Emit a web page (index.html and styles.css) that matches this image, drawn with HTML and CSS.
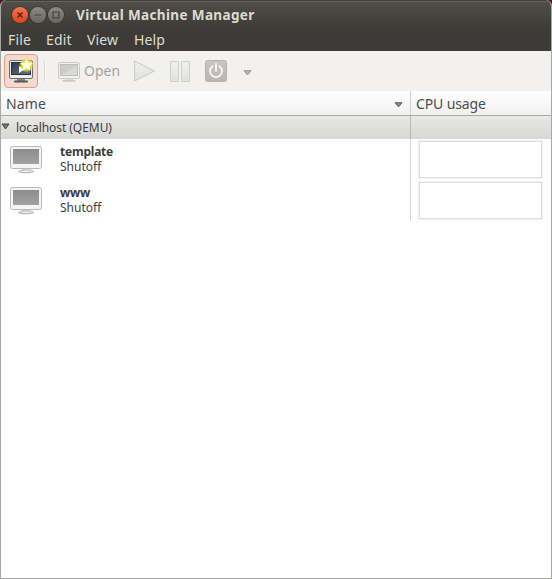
FILE: index.html
```html
<!DOCTYPE html>
<html lang="en">
<head>
<meta charset="utf-8">
<title>Virtual Machine Manager</title>
<link rel="stylesheet" href="styles.css">
</head>
<body>
<svg class="defs" width="0" height="0" aria-hidden="true">
  <defs>
    <linearGradient id="screen" x2="0" y2="1"><stop stop-color="#8c8c8c"/><stop offset="1" stop-color="#a2a2a2"/></linearGradient>
    <linearGradient id="blue" x2="1" y2="1"><stop stop-color="#30394c"/><stop offset="1" stop-color="#687487"/></linearGradient>
    <linearGradient id="power" x2="0" y2="1"><stop stop-color="#cbc6c4"/><stop offset="1" stop-color="#b9b3b2"/></linearGradient>
    <linearGradient id="pale" x2="0" y2="1"><stop stop-color="#f0f0ee"/><stop offset="1" stop-color="#e0e2dd"/></linearGradient>
    <radialGradient id="glow"><stop stop-color="#fff957"/><stop offset=".65" stop-color="#ece62b" stop-opacity=".9"/><stop offset="1" stop-color="#eee94b" stop-opacity="0"/></radialGradient>
    <symbol id="monitor" viewBox="0 0 34 28">
      <path d="M12 22.500h10v3H12z" fill="#d0d0d0"/>
      <ellipse cx="17" cy="25.500" rx="8" ry="1.700" fill="#b9b9b9"/>
      <ellipse cx="17" cy="25.200" rx="6.500" ry=".7" fill="#eee"/>
      <rect x="1.500" y=".5" width="31" height="22" rx="2" fill="#f5f5f5" stroke="#b9b9b9"/>
      <rect x="4" y="3" width="26" height="15" fill="url(#screen)"/>
    </symbol>
  </defs>
</svg>
<div class="window">
  <header class="chrome">
    <div class="titlebar">
      <div class="controls">
        <svg class="control close" viewBox="0 0 16 16"><path d="m5.500 5.500 5 5m0-5-5 5"/></svg>
        <svg class="control" viewBox="0 0 16 16"><path d="M4.500 8h7"/></svg>
        <svg class="control" viewBox="0 0 16 16"><path d="M5 5h6v6H5z"/></svg>
      </div>
      <h1>Virtual Machine Manager</h1>
    </div>
    <nav class="menu"><span class="file">File</span><span class="edit">Edit</span><span class="view">View</span><span>Help</span></nav>
  </header>
  <div class="toolbar">
    <button class="new" aria-label="New">
      <svg width="32" height="32" viewBox="0 0 32 32">
        <path d="M12 24h8v3h-8z" fill="#85898b"/><rect x="9" y="25.500" width="14" height="2" rx="1" fill="#53585b"/>
        <rect x="4.500" y="5.500" width="23" height="18" rx="1.500" fill="#eceeed" stroke="#696d70"/>
        <rect x="6.500" y="7.500" width="19" height="12" fill="url(#blue)" stroke="#29303d"/>
        <path d="M14 11v7l6-4z" fill="#fff"/>
        <circle cx="21.500" cy="10" r="7.500" fill="url(#glow)"/>
        <path d="m21.500 3.500 1.800 4.300 4.700.3-3.600 3 1.200 4.600-4.100-2.500-4.100 2.500 1.200-4.600-3.600-3 4.700-.3z" fill="#ffffe8"/>
      </svg>
    </button>
    <i class="separator"></i>
    <svg class="open-icon" width="24" height="21" viewBox="0 0 24 21">
      <path d="M8 16h8v3H8z" fill="#ddd"/><rect x="5.500" y="18" width="13" height="1.700" rx=".8" fill="#c9c9c8"/>
      <rect x="1.500" y=".5" width="21" height="16" rx="1.500" fill="#f1f1ef" stroke="#cbcac8"/>
      <rect x="3.500" y="2.500" width="17" height="11" fill="#cecdcc" stroke="#bdbdbb"/><path d="M4 13 20 4v9z" fill="#dad9d8"/>
    </svg>
    <span class="open">Open</span>
    <svg class="play" width="22" height="22" viewBox="0 0 22 22"><path d="M.6 1v20L20.500 11z" fill="url(#pale)" stroke="#c9cac7"/></svg>
    <svg class="pause" width="20" height="21" viewBox="0 0 20 21"><path d="M.5.5h8v20h-8zM11.500.5h8v20h-8z" fill="url(#pale)" stroke="#d0d1ce"/></svg>
    <svg class="power" width="22" height="22" viewBox="0 0 22 22"><rect x=".5" y=".5" width="21" height="21" rx="2" fill="url(#power)" stroke="#b7b1b0"/><path d="M7.500 6.300a6 6 0 1 0 7 0M11 4v7" fill="none" stroke="#f5f3f2" stroke-width="2" stroke-linecap="round"/></svg>
    <svg class="more" width="9" height="6" viewBox="0 0 9 6"><path d="M1 .7h7L4.500 5z" fill="#b5b5b5" stroke="#979797"/></svg>
  </div>
  <div class="columns">
    <div class="name-head"><span>Name</span><svg width="9" height="6" viewBox="0 0 9 6"><path d="M1 .7h7L4.500 5z" fill="#888" stroke="#666"/></svg></div>
    <div class="cpu-head"><span>CPU usage</span></div>
  </div>
  <div class="group">
    <div class="group-name"><svg width="9" height="7" viewBox="0 0 9 7"><path d="M1 1h7L4.500 6z" fill="#777" stroke="#484848"/></svg><span>localhost (QEMU)</span></div>
  </div>
  <main>
    <div class="row">
      <div class="machine"><svg width="34" height="28"><use href="#monitor"/></svg><div class="label"><b>template</b><span>Shutoff</span></div></div>
      <div class="usage"><div class="graph"></div></div>
    </div>
    <div class="row">
      <div class="machine"><svg width="34" height="28"><use href="#monitor"/></svg><div class="label"><b>www</b><span>Shutoff</span></div></div>
      <div class="usage"><div class="graph"></div></div>
    </div>
  </main>
</div>
</body>
</html>
```
FILE: styles.css
```css
* { box-sizing: border-box; }
body { margin: 0; background: #4b1515; font: 13.5px/18px "Noto Sans", "Open Sans", sans-serif; color: #4c4c4c; }
svg { display: block; flex: none; }
span, h1, b { white-space: nowrap; }
.defs { position: absolute; }
.window { height: 579px; display: flex; flex-direction: column; background: #fff; border: 1px solid #a7a7a2; border-top: 0; border-radius: 6px 6px 0 0; overflow: hidden; }
.chrome { height: 51px; flex: none; margin: 0 -1px; background: linear-gradient(#504f49, #3c3b37 28px); border-top: 1px solid #403f3b; box-shadow: inset 0 1px #65645c; color: #dfdbd2; }
.titlebar { height: 27px; display: flex; align-items: center; padding: 0 0 0 11px; }
.controls { display: flex; gap: 2px; width: 65px; padding: 1px 0 0 1px; }
.control { width: 16px; height: 16px; border-radius: 50%; background: linear-gradient(#8b8a83, #686760); box-shadow: 0 0 0 1px #383733; fill: none; stroke: #42413b; stroke-width: 1.2; }
.close { background: linear-gradient(#f5774e, #dc431c); stroke: #5d2313; stroke-width: 1.5; }
h1 { margin: 0; font-size: 13.5px; line-height: 20px; letter-spacing: .36px; }
.menu { display: flex; padding: 2px 8px 0; font-size: 14px; line-height: 20px; letter-spacing: .15px; }
.file { width: 38px; }
.edit { width: 41px; }
.view { width: 47px; }
.toolbar { height: 40px; flex: none; display: flex; align-items: center; padding: 0 3px; background: #f2f1f0; }
.new { display: grid; place-items: center; width: 34px; height: 34px; padding: 0; border: 1px solid #e69b80; border-radius: 4px; background: #f3d9ce; }
.separator { width: 2px; height: 20px; margin-left: 6px; background: #d8d7d5; border-right: 1px solid #fafafa; }
.open-icon { margin-left: 11px; margin-top: 2px; }
.open { width: 38px; margin-left: 3px; font-size: 14px; color: #a4a39f; }
.play { margin-left: 12px; }
.pause { margin-left: 14px; }
.power { margin-left: 15px; }
.more { margin-left: 16px; margin-top: 3px; }
.columns { height: 25px; flex: none; display: flex; background: linear-gradient(#fff, #f0f0ef); border-bottom: 1px solid #aaa9a6; font-size: 14px; line-height: 24px; }
.name-head { width: 410px; display: flex; align-items: center; justify-content: space-between; padding: 1px 7px 0 5px; border-right: 1px solid #cfcfcd; }
.name-head svg { margin-top: 2px; }
.name-head span { letter-spacing: .15px; }
.cpu-head { padding: 1px 0 0 5px; letter-spacing: -.12px; }
.group { height: 23px; flex: none; background: linear-gradient(#e8e8e7, #d8d7d5); font-size: 12px; line-height: 24px; color: #3c3c3c; }
.group-name { width: 410px; height: 23px; display: flex; gap: 6px; border-right: 1px solid #b9b8b6; letter-spacing: -.05px; }
.group-name svg { margin-top: 7px; }
.row { display: flex; height: 41px; }
.machine { display: flex; width: 410px; padding: 7px 0 0 8px; border-right: 1px solid #d4d4d2; }
.label { display: flex; flex-direction: column; margin: -2px 0 0 17px; font-size: 12px; line-height: 15px; color: #3c3c3c; }
.label b { letter-spacing: -.22px; }
.usage { padding: 1px 0 0 7px; }
.graph { width: 125px; height: 39px; border: 2px solid #dedede; outline: 1px solid #f1f1f1; outline-offset: -1px; }
```
